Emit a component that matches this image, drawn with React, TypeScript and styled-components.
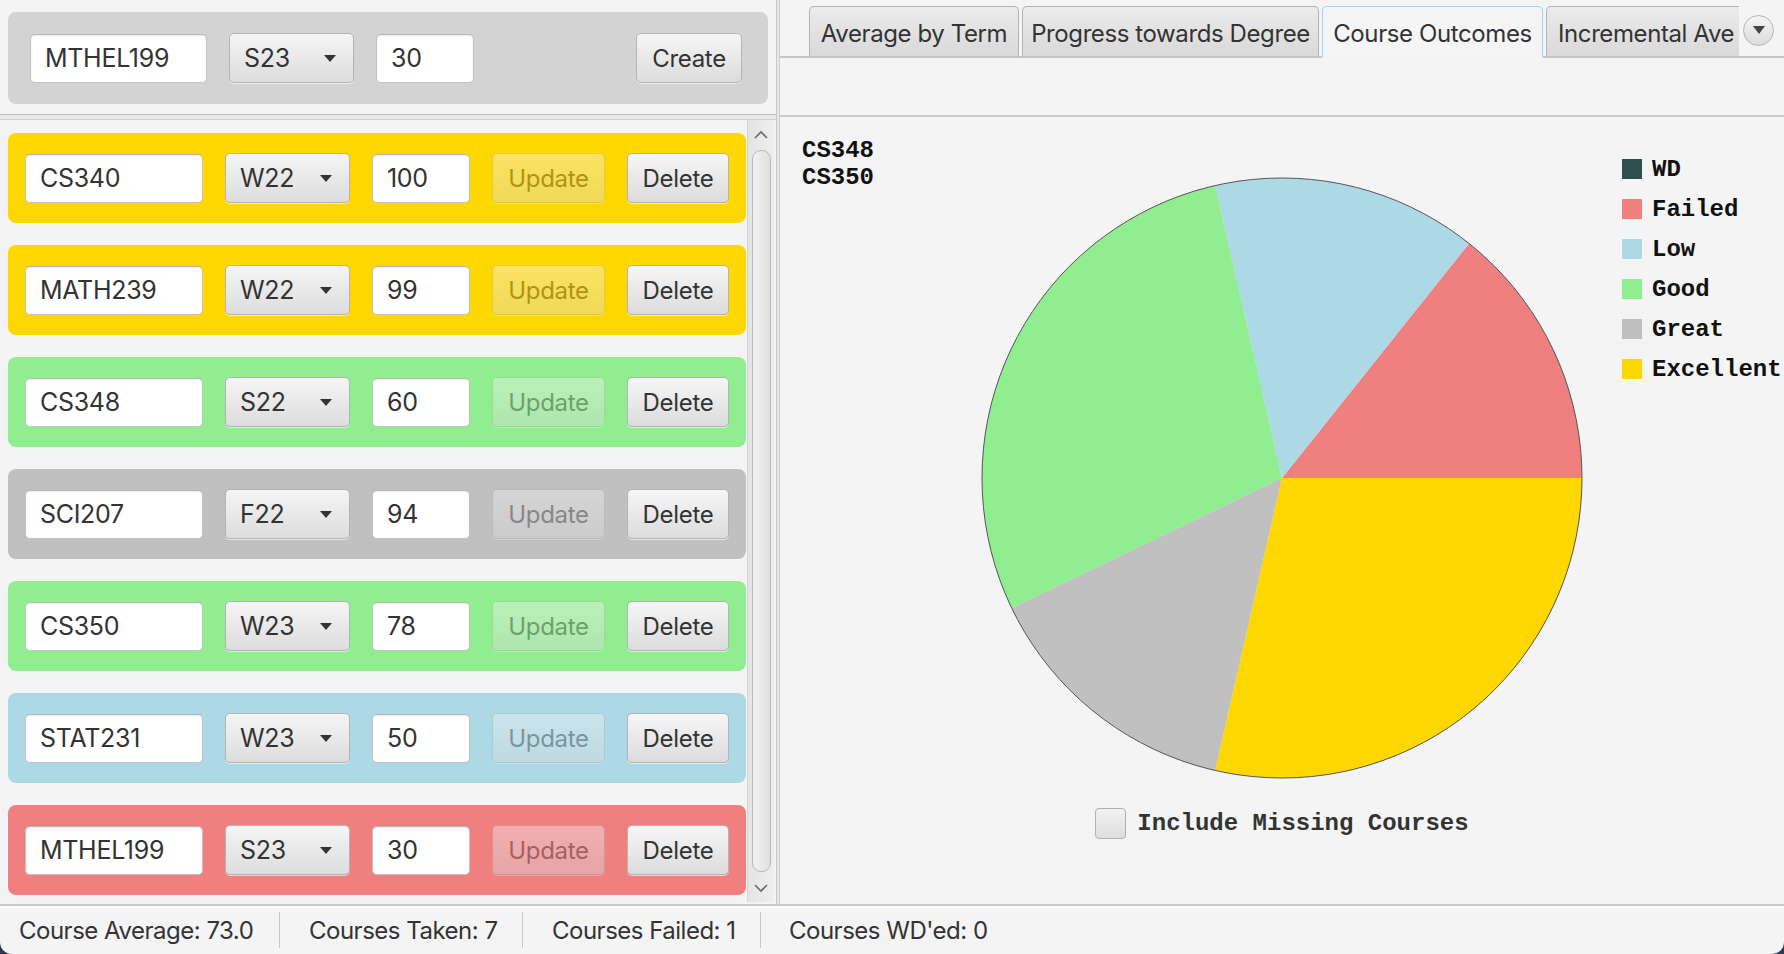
import React from "react";
import styled, { createGlobalStyle } from "styled-components";

const GlobalStyle = createGlobalStyle`
  html, body {
    margin: 0;
    padding: 0;
    background: #2d3a52;
  }
  body {
    font-family: Inter, "Noto Sans", sans-serif;
  }
  * {
    box-sizing: border-box;
  }
`;

const courses = [
  { code: "CS340", term: "W22", grade: "100", color: "#FFD700" },
  { code: "MATH239", term: "W22", grade: "99", color: "#FFD700" },
  { code: "CS348", term: "S22", grade: "60", color: "#90EE90" },
  { code: "SCI207", term: "F22", grade: "94", color: "#C0C0C0" },
  { code: "CS350", term: "W23", grade: "78", color: "#90EE90" },
  { code: "STAT231", term: "W23", grade: "50", color: "#ADD8E6" },
  { code: "MTHEL199", term: "S23", grade: "30", color: "#F08080" },
];

const slices = [
  { label: "Failed", value: 1, color: "#F08080" },
  { label: "Low", value: 1, color: "#ADD8E6" },
  { label: "Good", value: 2, color: "#90EE90" },
  { label: "Great", value: 1, color: "#C0C0C0" },
  { label: "Excellent", value: 2, color: "#FFD700" },
];

const legend = [
  { label: "WD", color: "#2F4F4F" },
  { label: "Failed", color: "#F08080" },
  { label: "Low", color: "#ADD8E6" },
  { label: "Good", color: "#90EE90" },
  { label: "Great", color: "#C0C0C0" },
  { label: "Excellent", color: "#FFD700" },
];

const Window = styled.div`
  width: 1784px;
  height: 954px;
  background: #f4f4f4;
  color: #333;
  display: flex;
  flex-direction: column;
  border-radius: 0 0 12px 12px;
  overflow: hidden;
`;

const Main = styled.div`
  flex: 1;
  display: flex;
  min-height: 0;
`;

const LeftPane = styled.div`
  width: 776px;
  display: flex;
  flex-direction: column;
`;

const TopArea = styled.div`
  padding: 12px 8px 10px 8px;
`;

const FormPanel = styled.div`
  height: 92px;
  background: #d3d3d3;
  border-radius: 8px;
  display: flex;
  align-items: center;
  gap: 22px;
  padding: 0 26px 0 22px;
`;

const Field = styled.input<{ $w: number }>`
  width: ${(p) => p.$w}px;
  height: 49px;
  background: #fff;
  border: 1px solid #c3c3c3;
  border-top-color: #b5b5b5;
  border-radius: 5px;
  box-shadow: inset 0 1px 2px rgba(0, 0, 0, 0.08);
  padding: 0 14px;
  font-family: Inter, "Noto Sans", sans-serif;
  font-size: 25px;
  letter-spacing: -0.3px;
  color: #333;
  outline: none;
`;

const Combo = styled.div<{ $w: number }>`
  width: ${(p) => p.$w}px;
  height: 50px;
  border: 1px solid #b4b4b4;
  border-radius: 5px;
  background: linear-gradient(#f5f5f5, #dddddd);
  box-shadow: 0 1px 0 rgba(255, 255, 255, 0.6);
  display: flex;
  align-items: center;
  justify-content: space-between;
  padding: 0 17px 0 14px;
  font-size: 25px;
  letter-spacing: -0.3px;
`;

const Arrow = styled.span`
  width: 0;
  height: 0;
  border-left: 6px solid transparent;
  border-right: 6px solid transparent;
  border-top: 7px solid #333;
`;

const Button = styled.button<{ $w: number }>`
  width: ${(p) => p.$w}px;
  height: 50px;
  border: 1px solid #b4b4b4;
  border-radius: 5px;
  background: linear-gradient(#f6f6f6, #dcdcdc);
  box-shadow: 0 1px 0 rgba(255, 255, 255, 0.6);
  font-family: Inter, "Noto Sans", sans-serif;
  font-size: 24px;
  letter-spacing: -0.3px;
  color: #333;
  padding: 0;
  &:disabled {
    opacity: 0.4;
  }
`;

const Spacer = styled.div`
  flex: 1;
`;

const ScrollPane = styled.div`
  flex: 1;
  display: flex;
  min-height: 0;
  border-top: 1px solid #bdbdbd;
  box-shadow: inset 0 4px 0 #e9e9e9, inset 0 5px 0 #cfcfcf;
`;

const List = styled.div`
  width: 747px;
  padding: 18px 0 0 8px;
  display: flex;
  flex-direction: column;
  gap: 22px;
  overflow: hidden;
`;

const Row = styled.div<{ $bg: string }>`
  width: 738px;
  height: 90px;
  flex-shrink: 0;
  background: ${(p) => p.$bg};
  border-radius: 8px;
  display: flex;
  align-items: center;
  gap: 22px;
  padding: 0 14px 0 17px;
`;

const ScrollBar = styled.div`
  width: 27px;
  margin: 5px 2px 2px 0;
  background: linear-gradient(to right, #e4e4e4, #eeeeee);
  border-left: 1px solid #d6d6d6;
  display: flex;
  flex-direction: column;
  align-items: center;
`;

const ArrowCell = styled.div`
  height: 28px;
  display: flex;
  align-items: center;
  justify-content: center;
`;

const Thumb = styled.div`
  flex: 1;
  width: 19px;
  margin: 2px 0;
  border: 1px solid #b9b9b9;
  border-radius: 9px;
  background: linear-gradient(to right, #f2f2f2, #e0e0e0);
`;

const Divider = styled.div`
  width: 4px;
  background: #e6e6e6;
  border-left: 1px solid #c8c8c8;
  border-right: 1px solid #d0d0d0;
`;

const RightPane = styled.div`
  flex: 1;
  display: flex;
  flex-direction: column;
  min-width: 0;
`;

const TabHeader = styled.div`
  height: 58px;
  display: flex;
  align-items: flex-end;
  padding-left: 29px;
  border-bottom: 2px solid #c6c6c6;
`;

const TabStrip = styled.div`
  flex: 1;
  display: flex;
  gap: 3px;
  overflow: hidden;
  margin-bottom: -2px;
`;

const Tab = styled.div<{ $w: number; $selected?: boolean; $left?: boolean }>`
  flex-shrink: 0;
  width: ${(p) => p.$w}px;
  height: 52px;
  display: flex;
  align-items: center;
  justify-content: ${(p) => (p.$left ? "flex-start" : "center")};
  padding: 3px 0 0 ${(p) => (p.$left ? "11px" : "0")};
  font-size: 24px;
  letter-spacing: -0.4px;
  white-space: nowrap;
  overflow: hidden;
  border: 1px solid ${(p) => (p.$selected ? "#a8cfe8" : "#b3b3b3")};
  border-bottom: 2px solid ${(p) => (p.$selected ? "#f4f4f4" : "#c6c6c6")};
  border-radius: 5px 5px 0 0;
  background: ${(p) =>
    p.$selected ? "#f5f5f5" : "linear-gradient(#ebebeb, #d9d9d9)"};
`;

const TabMenu = styled.div`
  width: 31px;
  height: 31px;
  margin: 0 10px 10px 4px;
  border-radius: 50%;
  border: 1px solid #b4b4b4;
  background: linear-gradient(#f6f6f6, #dcdcdc);
  display: flex;
  align-items: center;
  justify-content: center;
`;

const TabBand = styled.div`
  height: 59px;
  border-bottom: 2px solid #c8c8c8;
`;

const ChartArea = styled.div`
  flex: 1;
  display: flex;
  padding: 20px 0 0 22px;
  font-family: "Liberation Mono", "DejaVu Sans Mono", monospace;
  font-weight: bold;
  font-size: 24px;
  color: #111;
`;

const Labels = styled.div`
  width: 179px;
  line-height: 27px;
`;

const PieColumn = styled.div`
  width: 602px;
  margin-top: 40px;
  display: flex;
  flex-direction: column;
  align-items: center;
`;

const CheckRow = styled.div`
  margin-top: 29px;
  display: flex;
  align-items: center;
  gap: 11px;
  color: #333;
`;

const CheckBox = styled.div`
  width: 31px;
  height: 31px;
  border: 1px solid #b0b0b0;
  border-radius: 4px;
  background: linear-gradient(#f2f2f2, #dedede);
`;

const Legend = styled.div`
  margin: 12px 0 0 39px;
  display: flex;
  flex-direction: column;
`;

const LegendItem = styled.div`
  height: 40px;
  display: flex;
  align-items: center;
  gap: 10px;
  white-space: nowrap;
`;

const Swatch = styled.span<{ $c: string }>`
  width: 20px;
  height: 20px;
  background: ${(p) => p.$c};
`;

const StatusBar = styled.div`
  height: 50px;
  border-top: 2px solid #c8c8c8;
  box-shadow: inset 0 2px 0 #fafafa;
  display: flex;
  align-items: center;
  font-size: 24px;
  letter-spacing: -0.5px;
`;

const StatusItem = styled.div<{ $w?: number; $pl: number }>`
  width: ${(p) => (p.$w ? `${p.$w}px` : "auto")};
  padding-left: ${(p) => p.$pl}px;
  white-space: nowrap;
`;

const StatusSep = styled.div`
  width: 1px;
  height: 36px;
  background: #c8c8c8;
`;

const Chevron = ({ up }: { up?: boolean }) => (
  <svg width="14" height="9" viewBox="0 0 14 9">
    <polyline
      points={up ? "1,8 7,2 13,8" : "1,1 7,7 13,1"}
      fill="none"
      stroke="#6a6a6a"
      strokeWidth="1.6"
    />
  </svg>
);

const Pie = () => {
  const cx = 301;
  const cy = 301;
  const r = 300;
  const total = slices.reduce((s, x) => s + x.value, 0);
  let a = 0;
  const pt = (deg: number) => {
    const rad = (deg * Math.PI) / 180;
    return `${cx + r * Math.cos(rad)},${cy - r * Math.sin(rad)}`;
  };
  return (
    <svg width="602" height="602" viewBox="0 0 602 602">
      {slices.map((s) => {
        const span = (s.value / total) * 360;
        const a0 = a;
        const a1 = a + span;
        a = a1;
        const large = span > 180 ? 1 : 0;
        return (
          <path
            key={s.label}
            d={`M${cx},${cy} L${pt(a0)} A${r},${r} 0 ${large} 0 ${pt(a1)} Z`}
            fill={s.color}
          />
        );
      })}
      <circle cx={cx} cy={cy} r={r} fill="none" stroke="#555" strokeWidth="1" />
    </svg>
  );
};

const App = () => {
  return (
    <>
      <GlobalStyle />
      <Window>
        <Main>
          <LeftPane>
            <TopArea>
              <FormPanel>
                <Field $w={177} readOnly value="MTHEL199" />
                <Combo $w={125}>
                  S23
                  <Arrow />
                </Combo>
                <Field $w={98} readOnly value="30" />
                <Spacer />
                <Button $w={106}>Create</Button>
              </FormPanel>
            </TopArea>
            <ScrollPane>
              <List>
                {courses.map((c) => (
                  <Row key={c.code} $bg={c.color}>
                    <Field $w={178} readOnly value={c.code} />
                    <Combo $w={125}>
                      {c.term}
                      <Arrow />
                    </Combo>
                    <Field $w={98} readOnly value={c.grade} />
                    <Button $w={113} disabled>
                      Update
                    </Button>
                    <Button $w={102}>Delete</Button>
                  </Row>
                ))}
              </List>
              <ScrollBar>
                <ArrowCell>
                  <Chevron up />
                </ArrowCell>
                <Thumb />
                <ArrowCell>
                  <Chevron />
                </ArrowCell>
              </ScrollBar>
            </ScrollPane>
          </LeftPane>
          <Divider />
          <RightPane>
            <TabHeader>
              <TabStrip>
                <Tab $w={210}>Average by Term</Tab>
                <Tab $w={297}>Progress towards Degree</Tab>
                <Tab $w={221} $selected>
                  Course Outcomes
                </Tab>
                <Tab $w={260} $left>
                  Incremental Ave
                </Tab>
              </TabStrip>
              <TabMenu>
                <svg width="12" height="9" viewBox="0 0 12 9">
                  <polygon points="0,0 12,0 6,8" fill="#444" />
                </svg>
              </TabMenu>
            </TabHeader>
            <TabBand />
            <ChartArea>
              <Labels>
                <div>CS348</div>
                <div>CS350</div>
              </Labels>
              <PieColumn>
                <Pie />
                <CheckRow>
                  <CheckBox />
                  Include Missing Courses
                </CheckRow>
              </PieColumn>
              <Legend>
                {legend.map((l) => (
                  <LegendItem key={l.label}>
                    <Swatch $c={l.color} />
                    {l.label}
                  </LegendItem>
                ))}
              </Legend>
            </ChartArea>
          </RightPane>
        </Main>
        <StatusBar>
          <StatusItem $w={279} $pl={19}>
            Course Average: 73.0
          </StatusItem>
          <StatusSep />
          <StatusItem $w={242} $pl={29}>
            Courses Taken: 7
          </StatusItem>
          <StatusSep />
          <StatusItem $w={237} $pl={29}>
            Courses Failed: 1
          </StatusItem>
          <StatusSep />
          <StatusItem $pl={28}>Courses WD'ed: 0</StatusItem>
        </StatusBar>
      </Window>
    </>
  );
};

export default App;
